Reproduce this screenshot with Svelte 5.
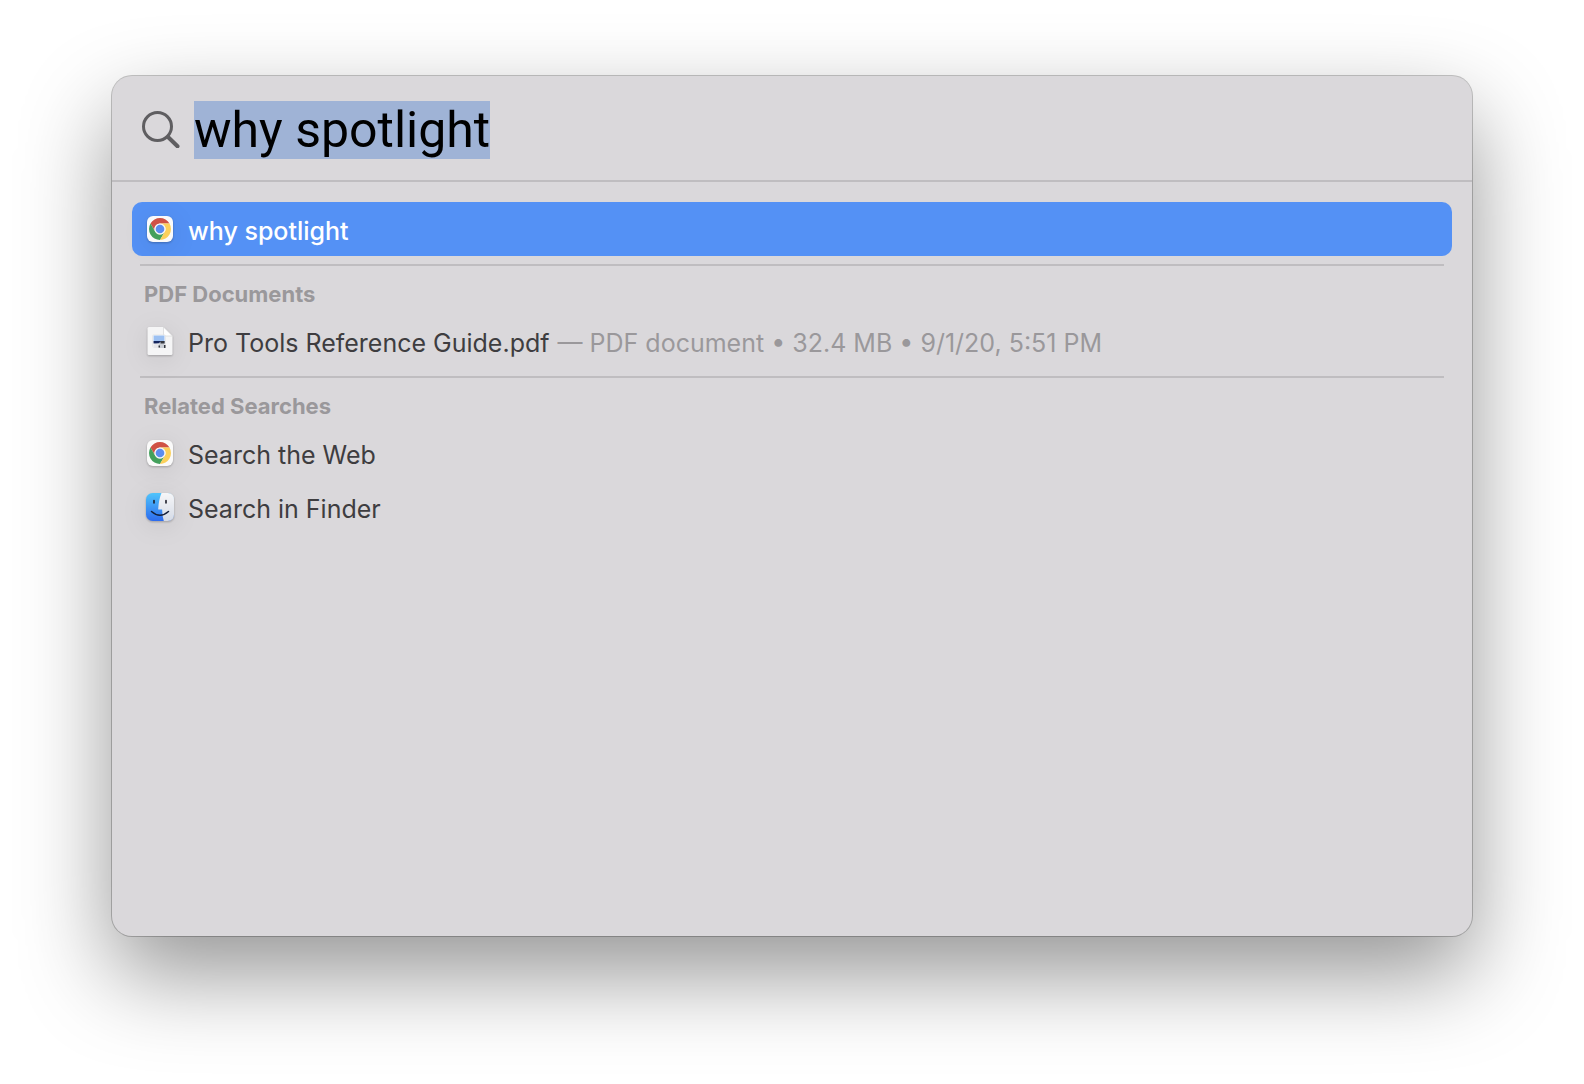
<script>
    import { onMount } from 'svelte'

    let query = $state("why spotlight")
    let selected = $state("top")
    let field

    const sections = [
        { title: "", items: [{ id: "top", icon: "chrome", name: "why spotlight" }] },
        {
            title: "PDF Documents",
            items: [{
                id: "pdf",
                icon: "pdf",
                name: "Pro Tools Reference Guide.pdf",
                info: "— PDF document • 32.4 MB • 9/1/20, 5:51 PM"
            }]
        },
        {
            title: "Related Searches",
            items: [
                { id: "web", icon: "chrome", name: "Search the Web" },
                { id: "finder", icon: "finder", name: "Search in Finder" }
            ]
        }
    ]

    onMount(() => {
        field.focus()
        field.select()
    })
</script>

{#snippet chrome()}
    <svg class="icon" viewBox="0 0 28 28" aria-hidden="true">
        <rect x="1" y="1" width="26" height="26" rx="6" fill="#fafafa" />
        <path d="M4.5 8.5 A11 11 0 0 1 23.5 8.5 L14 8.5 A5.5 5.5 0 0 0 9.2 16.8 Z" fill="#cf5245" />
        <path d="M4.5 8.5 A11 11 0 0 0 14 25 L18.8 16.8 A5.5 5.5 0 0 1 9.2 16.8 Z" fill="#43a05c" />
        <path d="M23.5 8.5 A11 11 0 0 1 14 25 L18.8 16.8 A5.5 5.5 0 0 0 14 8.5 Z" fill="#fbd05a" />
        <circle cx="14" cy="14" r="5.5" fill="#f4f4f4" />
        <circle cx="14" cy="14" r="4.3" fill="#5b8def" />
    </svg>
{/snippet}

{#snippet pdf()}
    <svg class="icon" viewBox="0 0 28 28" aria-hidden="true">
        <path d="M3 0 H17.5 L26.5 9 V26.5 Q26.5 28 25 28 H3 Q1.5 28 1.5 26.5 V1.5 Q1.5 0 3 0 Z" fill="#f5f5f6" />
        <path d="M17.5 0 V7.5 Q17.5 9 19 9 H26.5 Z" fill="#fff" stroke="#d0d0d2" stroke-width="0.6" />
        <rect x="6.5" y="8" width="13" height="12" rx="1" fill="#fff" stroke="#ddd" stroke-width="0.6" />
        <path d="M7.5 8.5 H18.5 V14 H7.5 Z" fill="#9cc0f2" />
        <path d="M7.5 14 H18.5 V16.5 H7.5 Z" fill="#16265e" />
        <path d="M7 17.5 L13 16.5 L14 21 L8 21 Z" fill="#e6e6ea" />
        <path d="M13 16 L15 14.5 H18.5 V21 H13 Z" fill="#c9cdd4" />
        <path d="M14.5 14 H18.5 V16.5 H14.5 Z M12.5 18.5 H14 V20.5 H12.5 Z M18 18 H19.5 V21 H18 Z" fill="#34373f" />
    </svg>
{/snippet}

{#snippet finder()}
    <svg class="icon" viewBox="0 0 28 28" aria-hidden="true">
        <defs>
            <linearGradient id="finder-blue" x1="0" y1="0" x2="0" y2="1">
                <stop offset="0" stop-color="#4fc4fb" />
                <stop offset="1" stop-color="#2d6bee" />
            </linearGradient>
            <linearGradient id="finder-white" x1="0" y1="0" x2="0" y2="1">
                <stop offset="0" stop-color="#f6f6f8" />
                <stop offset="1" stop-color="#d5dbe6" />
            </linearGradient>
        </defs>
        <rect width="28" height="28" rx="6.5" fill="url(#finder-blue)" />
        <path d="M15.5 0 H21.5 Q28 0 28 6.5 V21.5 Q28 28 21.5 28 H17.8 Q16.3 23 16.1 16.5 H12.7 Q12.2 16.5 12.2 16 Q12.7 6.5 15.5 0 Z" fill="url(#finder-white)" />
        <path d="M8 7.5 V10 M20 7.5 V10" stroke="#1b1d28" stroke-width="1.6" stroke-linecap="round" />
        <path d="M5.5 18.5 Q14 26 22.5 18.5" fill="none" stroke="#15213c" stroke-width="1.5" stroke-linecap="round" />
    </svg>
{/snippet}

<main class="desktop">
    <div class="panel">
        <label class="search">
            <svg class="glass" viewBox="0 0 40 40" aria-hidden="true">
                <circle cx="17.5" cy="18.5" r="14" />
                <path class="handle" d="M28 29 L37.5 38.3" />
            </svg>
            <input bind:this={field} bind:value={query} type="text" aria-label="Spotlight Search" spellcheck="false" autocomplete="off">
        </label>

        <div class="results">
            {#each sections as section}
                <section>
                    {#if section.title}
                        <h2>{section.title}</h2>
                    {/if}
                    <ul>
                        {#each section.items as item}
                            <li>
                                <button class:selected={selected === item.id} onclick={() => selected = item.id}>
                                    {#if item.icon === "chrome"}
                                        {@render chrome()}
                                    {:else if item.icon === "pdf"}
                                        {@render pdf()}
                                    {:else}
                                        {@render finder()}
                                    {/if}
                                    <span class="name">{item.name}</span>
                                    {#if item.info}
                                        <span class="info">{item.info}</span>
                                    {/if}
                                </button>
                            </li>
                        {/each}
                    </ul>
                </section>
            {/each}
        </div>
    </div>
</main>

<style>
:global(body) {
    background: #fff;
}

.desktop {
    display: flex;
    box-sizing: border-box;
    min-height: 100vh;
    padding: 76px 112px 148px;
    font-family: Inter, "Liberation Sans", sans-serif;
}

.panel {
    flex: 1;
    min-width: 0;
    border-radius: 20px;
    background: #dad8db;
    box-shadow: 0 0 0 1px rgba(0, 0, 0, 0.22), 0 38px 90px rgba(0, 0, 0, 0.42);
}

.search {
    display: flex;
    align-items: center;
    gap: 14px;
    height: 104px;
    padding: 0 28px;
    border-bottom: 2px solid #bfbdc0;
}

.glass {
    flex: none;
    width: 40px;
    height: 40px;
    fill: none;
    stroke: #5f5e61;
    stroke-width: 3;
    stroke-linecap: round;
}

.handle {
    stroke-width: 4;
}

.search input {
    flex: 1;
    min-width: 0;
    padding: 4px 0 0;
    border: 0;
    outline: 0;
    background: none;
    color: #000;
    font-family: Roboto, "Liberation Sans", sans-serif;
    font-size: 50px;
}

.search input::selection {
    background: #9fb3d6;
    color: #000;
}

.results {
    padding: 20px;
}

section + section::before {
    content: "";
    display: block;
    height: 2px;
    margin: 8px 8px 0;
    background: #bfbdc0;
}

h2 {
    margin: 0;
    padding: 8px 12px 0;
    color: #9a989b;
    font-size: 22px;
    font-weight: 700;
    line-height: 40px;
}

ul {
    margin: 0;
    padding: 0;
    list-style: none;
}

button {
    display: flex;
    align-items: center;
    width: 100%;
    height: 54px;
    padding: 0 14px;
    border: 0;
    border-radius: 10px;
    background: none;
    color: #3e3d40;
    font: inherit;
    font-size: 25px;
    text-align: left;
    white-space: nowrap;
}

button.selected {
    background: #5491f5;
    color: #fff;
    font-weight: 500;
}

.icon {
    flex: none;
    width: 28px;
    height: 28px;
    margin-right: 14px;
    filter: drop-shadow(0 1px 1px rgba(0, 0, 0, 0.25)) drop-shadow(0 4px 12px rgba(0, 0, 0, 0.08));
}

.name,
.info {
    padding-top: 4px;
}

.info {
    margin-left: 8px;
    color: #9a989b;
}
</style>
